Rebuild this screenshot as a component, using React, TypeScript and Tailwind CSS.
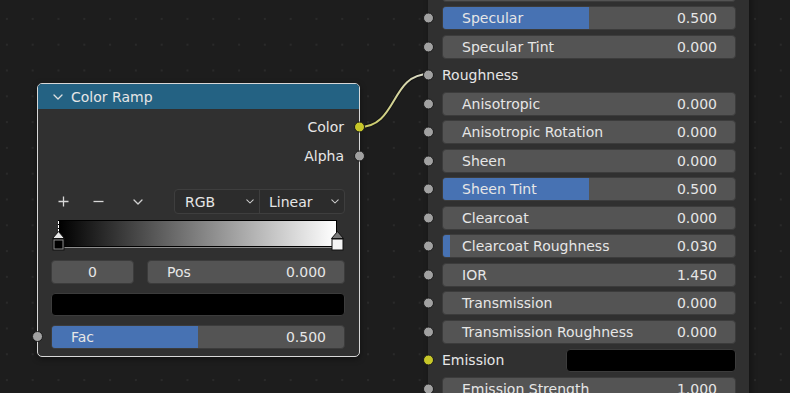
import React from 'react';

const font = "font-['DejaVu_Sans',sans-serif]";

const Socket = ({ yellow = false, side }: { yellow?: boolean; side: 'left' | 'right' }) => (
  <span
    className={`absolute top-1/2 -translate-y-1/2 w-[11px] h-[11px] rounded-full border border-[#1a1a1a] ${
      yellow ? 'bg-[#c7c729]' : 'bg-[#a1a1a1]'
    } ${side === 'left' ? 'left-[-5px]' : 'right-[-6px]'}`}
  />
);

const Field = ({
  label,
  value,
  fill,
  className = '',
}: {
  label: string;
  value: string;
  fill?: number;
  className?: string;
}) => (
  <div className={`relative h-[24px] rounded-[4px] bg-[#545454] border border-[#3c3c3c] overflow-hidden ${className}`}>
    {fill !== undefined && fill > 0 && (
      <div className="absolute left-0 top-0 bottom-0 bg-[#4772b3]" style={{ width: `${fill * 100}%` }} />
    )}
    <div className="relative flex h-full items-center justify-between pl-[19px] pr-[18px] text-[14px] leading-none text-[#e6e6e6]">
      <span>{label}</span>
      <span>{value}</span>
    </div>
  </div>
);

const Chevron = ({ size = 9, color = '#d0d0d0' }: { size?: number; color?: string }) => (
  <svg width={size} height={size * 0.6} viewBox="0 0 10 6" fill="none">
    <path d="M1 1 L5 5 L9 1" stroke={color} strokeWidth="1.3" strokeLinecap="round" strokeLinejoin="round" />
  </svg>
);

const Marker = ({ active }: { active: boolean }) => (
  <svg width="13" height="20" viewBox="0 0 13 20" className="block">
    <path d="M6.5 0.5 L12.5 7.5 L0.5 7.5 Z" fill={active ? '#e8e8e8' : '#7a7a7a'} stroke="#111" strokeWidth="1" />
    <rect x="0.5" y="7.5" width="12" height="12" fill="#111" />
    <rect x="2" y="9" width="9" height="9" fill={active ? '#000' : '#f4f4f4'} stroke={active ? '#8a8a8a' : '#f4f4f4'} strokeWidth="1" />
  </svg>
);

type Row =
  | { kind: 'field'; label: string; value: string; fill?: number }
  | { kind: 'label'; label: string; yellow?: boolean }
  | { kind: 'color'; label: string; yellow?: boolean };

const rows: Row[] = [
  { kind: 'field', label: '', value: '' },
  { kind: 'field', label: 'Specular', value: '0.500', fill: 0.5 },
  { kind: 'field', label: 'Specular Tint', value: '0.000' },
  { kind: 'label', label: 'Roughness' },
  { kind: 'field', label: 'Anisotropic', value: '0.000' },
  { kind: 'field', label: 'Anisotropic Rotation', value: '0.000' },
  { kind: 'field', label: 'Sheen', value: '0.000' },
  { kind: 'field', label: 'Sheen Tint', value: '0.500', fill: 0.5 },
  { kind: 'field', label: 'Clearcoat', value: '0.000' },
  { kind: 'field', label: 'Clearcoat Roughness', value: '0.030', fill: 0.025 },
  { kind: 'field', label: 'IOR', value: '1.450' },
  { kind: 'field', label: 'Transmission', value: '0.000' },
  { kind: 'field', label: 'Transmission Roughness', value: '0.000' },
  { kind: 'color', label: 'Emission', yellow: true },
  { kind: 'field', label: 'Emission Strength', value: '1.000' },
];

export default function App() {
  return (
    <div
      className={`relative w-[790px] h-[393px] overflow-hidden bg-[#1d1d1d] bg-[radial-gradient(circle,#2a2a2a_1.3px,transparent_1.5px)] bg-[length:25.8px_25.8px] bg-[position:-6px_6px] ${font}`}
    >
      {/* link Color -> Roughness */}
      <svg className="absolute inset-0" width="790" height="393">
        <defs>
          <linearGradient id="lnk" x1="359" y1="0" x2="429" y2="0" gradientUnits="userSpaceOnUse">
            <stop offset="0" stopColor="#c9c956" />
            <stop offset="1" stopColor="#dcdcd4" />
          </linearGradient>
        </defs>
        <path d="M359 127 C 398 127, 390 74, 429 74" stroke="#151515" strokeWidth="4" fill="none" />
        <path d="M359 127 C 398 127, 390 74, 429 74" stroke="url(#lnk)" strokeWidth="2" fill="none" />
      </svg>

      {/* Color Ramp node */}
      <div className="absolute left-[37px] top-[83px] w-[323px] rounded-[5px] border border-[#d8d8d8] bg-[#303030] shadow-[0_2px_6px_rgba(0,0,0,0.4)]">
        <div className="flex h-[25px] items-center rounded-t-[4px] bg-[#246283] pl-[15px] text-[14px] leading-none text-[#e6e6e6]">
          <Chevron size={10} color="#e0e0e0" />
          <span className="ml-[8px]">Color Ramp</span>
        </div>
        <div className="relative mt-[6px] flex h-[24px] items-center justify-end pr-[15px] text-[14px] leading-none text-[#e6e6e6]">
          Color
          <Socket yellow side="right" />
        </div>
        <div className="relative mt-[5px] flex h-[24px] items-center justify-end pr-[15px] text-[14px] leading-none text-[#e6e6e6]">
          Alpha
          <Socket side="right" />
        </div>
        <div className="pl-[13px] pr-[14px]">
          <div className="mt-[21px] flex h-[25px] items-center">
            <div className="flex w-[24px] justify-center">
              <svg width="11" height="11" viewBox="0 0 11 11">
                <path d="M5.5 0.5 V10.5 M0.5 5.5 H10.5" stroke="#d8d8d8" strokeWidth="1.3" />
              </svg>
            </div>
            <div className="flex w-[46px] justify-center">
              <svg width="11" height="11" viewBox="0 0 11 11">
                <path d="M0.5 5.5 H10.5" stroke="#d8d8d8" strokeWidth="1.3" />
              </svg>
            </div>
            <div className="flex w-[34px] justify-center">
              <Chevron size={10} />
            </div>
            <div className="w-[19px]" />
            <div className="flex h-[25px] w-[171px] rounded-[4px] border border-[#3e3e3e] bg-[#2c2c2c] text-[14px] leading-none text-[#e6e6e6]">
              <div className="flex w-[85px] items-center justify-between border-r border-[#3e3e3e] pl-[10px] pr-[5px]">
                <span>RGB</span>
                <Chevron size={8} />
              </div>
              <div className="flex flex-1 items-center justify-between pl-[9px] pr-[5px]">
                <span>Linear</span>
                <Chevron size={8} />
              </div>
            </div>
          </div>

          <div className="relative mt-[6px] ml-[7px] mr-[8px] h-[31px]">
            <div className="h-[27px] border border-black bg-[linear-gradient(to_right,#000,#fff)]" />
            <div className="h-px bg-[#8c8c8c]" />
            <div className="absolute left-[-0.5px] top-[1px] h-[11px] border-l border-dashed border-white" />
            <div className="absolute left-[-6px] top-[11px]">
              <Marker active />
            </div>
            <div className="absolute right-[-7px] top-[11px]">
              <Marker active={false} />
            </div>
          </div>

          <div className="mt-[9px] flex gap-[13px]">
            <div className="flex h-[24px] w-[83px] items-center justify-center rounded-[4px] border border-[#3c3c3c] bg-[#545454] text-[14px] leading-none text-[#e6e6e6]">
              0
            </div>
            <Field label="Pos" value="0.000" className="flex-1" />
          </div>

          <div className="mt-[9px] h-[23px] rounded-[4px] border border-[#3c3c3c] bg-black" />

          <div className="relative mt-[9px]">
            <Field label="Fac" value="0.500" fill={0.5} />
          </div>
        </div>
        <div className="h-[7px]" />
        <span className="absolute left-[-6px] top-[247px] w-[11px] h-[11px] rounded-full border border-[#1a1a1a] bg-[#a1a1a1]" />
      </div>

      {/* Principled BSDF node (partial) */}
      <div className="absolute left-[428px] top-[-24.75px] w-[321px] bg-[#303030] shadow-[2px_0_6px_rgba(0,0,0,0.35)]">
        {rows.map((r, i) => (
          <div key={i} className="relative flex h-[28.5px] items-center pl-[14px] pr-[13px]">
            <Socket side="left" yellow={'yellow' in r && !!r.yellow} />
            {r.kind === 'field' && <Field label={r.label} value={r.value} fill={r.fill} className="flex-1" />}
            {r.kind === 'label' && (
              <span className="text-[14px] leading-none text-[#e6e6e6]">{r.label}</span>
            )}
            {r.kind === 'color' && (
              <>
                <span className="w-[124px] text-[14px] leading-none text-[#e6e6e6]">{r.label}</span>
                <div className="h-[23px] flex-1 rounded-[4px] border border-[#3c3c3c] bg-black" />
              </>
            )}
          </div>
        ))}
      </div>
    </div>
  );
}
